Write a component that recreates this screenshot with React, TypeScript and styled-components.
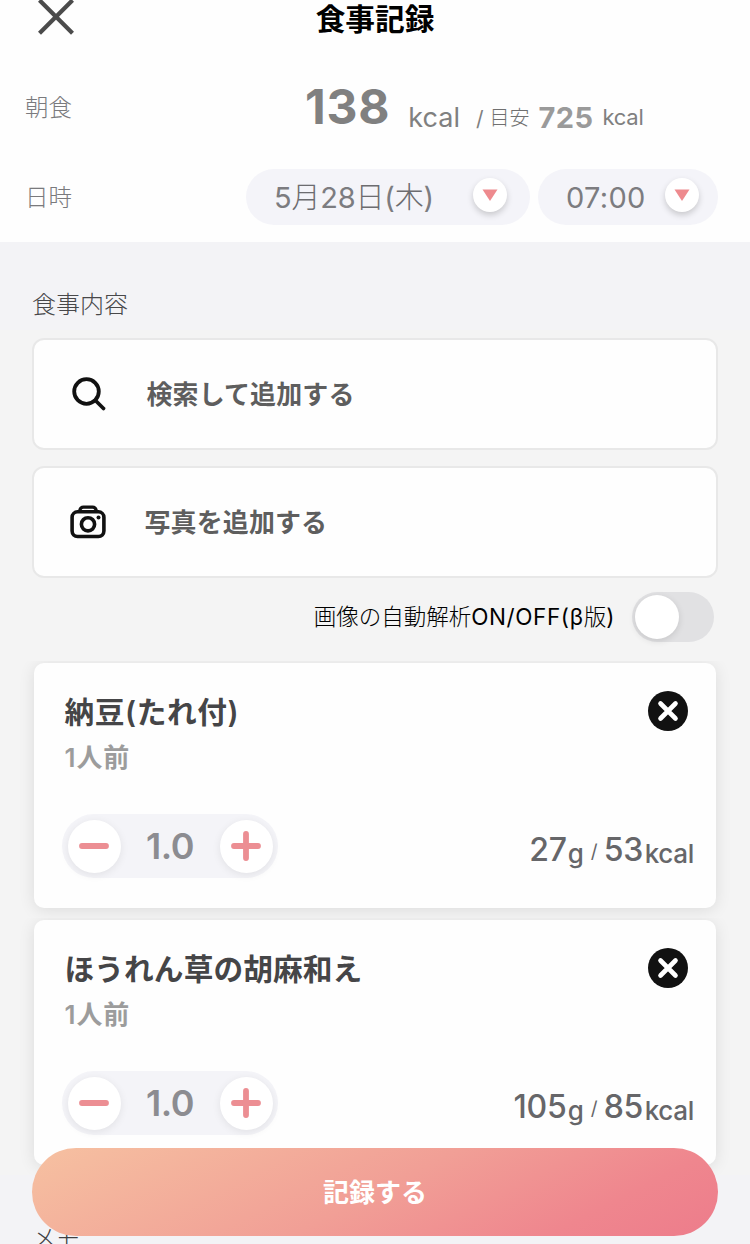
import React from "react";
import styled, { createGlobalStyle } from "styled-components";

const GlobalStyle = createGlobalStyle`
  * { box-sizing: border-box; }
  html, body { margin: 0; padding: 0; }
  body {
    font-family: Inter, "Noto Sans CJK JP", sans-serif;
    background: #f3f3f6;
  }
  button { font: inherit; border: 0; padding: 0; background: none; }
`;

const Screen = styled.div`
  position: relative;
  width: 750px;
  height: 1244px;
  overflow: hidden;
  background: #f3f3f6;
`;

const Header = styled.header`
  height: 242px;
  background: #fefefe;
`;

const TitleBar = styled.div`
  display: grid;
  grid-template-columns: 112px 1fr 112px;
  height: 38px;
`;

const CloseButton = styled.button`
  display: flex;
  justify-content: center;
  height: 38px;
`;

const Title = styled.h1`
  margin: 0;
  font-size: 29.7px;
  line-height: 38px;
  font-weight: 700;
  text-align: center;
  color: #000;
`;

const CalorieRow = styled.div`
  display: flex;
  height: 96px;
  padding-left: 25px;
  margin-top: 35px;
`;

const Label = styled.span<{ $width: number }>`
  width: ${(p) => p.$width}px;
  padding-top: 2px;
  font-size: 23.5px;
  line-height: 66px;
  font-weight: 300;
  color: #7a7a7d;
`;

const Figure = styled.span<{ $size: number; $top: number; $left?: number; $weight?: number; $color?: string; $track?: number }>`
  font-size: ${(p) => p.$size}px;
  line-height: 40px;
  height: 40px;
  margin-top: ${(p) => p.$top}px;
  margin-left: ${(p) => p.$left ?? 0}px;
  font-weight: ${(p) => p.$weight ?? 400};
  letter-spacing: ${(p) => p.$track ?? 0}px;
  color: ${(p) => p.$color ?? "#808080"};
  white-space: nowrap;
`;

const DateRow = styled.div`
  display: flex;
  align-items: center;
  height: 56px;
  padding-left: 25px;
`;

const Picker = styled.button<{ $width: number; $end: number }>`
  display: flex;
  align-items: center;
  justify-content: space-between;
  width: ${(p) => p.$width}px;
  height: 56px;
  margin-right: 8px;
  padding: 0 ${(p) => p.$end}px 0 28px;
  border-radius: 28px;
  background: #f4f4f9;
  font-size: 29px;
  line-height: 56px;
  color: #7c7c80;
  white-space: nowrap;
`;

const PickerText = styled.span<{ $track: number }>`
  padding-top: 2px;
  letter-spacing: ${(p) => p.$track}px;
`;

const Thin = styled.span`
  font-weight: 300;
  color: #6c6c70;
`;

const Knob = styled.span`
  display: flex;
  align-items: center;
  justify-content: center;
  width: 34px;
  height: 34px;
  margin-bottom: 4px;
  border-radius: 50%;
  background: #fff;
  box-shadow: 0 3px 6px rgba(0, 0, 0, 0.18);
`;

const Heading = styled.h2`
  margin: 0;
  height: 88px;
  padding: 32px 0 0 32px;
  font-size: 24px;
  line-height: 62px;
  font-weight: 300;
  color: #48484a;
`;

const Content = styled.main`
  height: 845px;
  padding-top: 8px;
  background: #f4f4f4;
`;

const AddButton = styled.button`
  display: flex;
  align-items: center;
  width: 686px;
  height: 112px;
  margin: 0 32px 16px;
  padding-left: 34px;
  border: 2px solid #e8e8e8;
  border-radius: 12px;
  background: #fefefe;
`;

const AddLabel = styled.span<{ $left: number }>`
  margin-left: ${(p) => p.$left}px;
  padding-top: 2px;
  font-size: 26px;
  font-weight: 600;
  line-height: 40px;
  letter-spacing: 0.1px;
  color: #5e5e5e;
`;

const ToggleRow = styled.div`
  display: flex;
  align-items: center;
  justify-content: flex-end;
  height: 50px;
  margin: -2px 36px 19px 0;
  font-size: 22.5px;
  line-height: 50px;
  font-weight: 300;
  color: #000;
`;

const Latin = styled.span`
  font-weight: 400;
  letter-spacing: 0.6px;
`;

const Toggle = styled.span`
  display: flex;
  align-items: center;
  width: 82px;
  height: 50px;
  margin-left: 17px;
  padding-left: 3px;
  border-radius: 25px;
  background: #e1e1e3;
`;

const ToggleThumb = styled.span`
  width: 44px;
  height: 44px;
  border-radius: 50%;
  background: #fff;
  box-shadow: 0 2px 7px rgba(0, 0, 0, 0.12);
`;

const MealCell = styled.section`
  height: 257px;
  padding: 2px 34px 10px;
  overflow: hidden;
`;

const MealCard = styled.article`
  display: flex;
  flex-direction: column;
  justify-content: space-between;
  height: 245px;
  padding: 28px 22px 30px 28px;
  border-radius: 10px;
  background: #fefefe;
  box-shadow: 0 2px 16px rgba(0, 0, 0, 0.1);
`;

const MealTop = styled.div`
  display: flex;
  justify-content: space-between;
  padding: 0 6px 0 2.5px;
`;

const MealName = styled.div<{ $track: number }>`
  font-size: 29.7px;
  line-height: 42px;
  font-weight: 600;
  letter-spacing: ${(p) => p.$track}px;
  color: #454547;
`;

const Serving = styled.div`
  font-size: 26px;
  line-height: 50px;
  font-weight: 600;
  letter-spacing: 0.9px;
  color: #9c9c9c;
`;

const RemoveButton = styled.button`
  width: 40px;
  height: 40px;
`;

const MealBottom = styled.div`
  display: flex;
  justify-content: space-between;
`;

const Stepper = styled.div`
  display: flex;
  align-items: center;
  justify-content: space-between;
  width: 216px;
  height: 64px;
  padding: 0 5.5px;
  border-radius: 32px;
  background: #f4f4f8;
  font-size: 36px;
  letter-spacing: -0.4px;
  font-weight: 600;
  color: #8c8c91;
`;

const StepButton = styled.button`
  display: flex;
  align-items: center;
  justify-content: center;
  width: 53px;
  height: 53px;
  border-radius: 50%;
  background: #fff;
  box-shadow: 0 2px 9px rgba(0, 0, 0, 0.08);
`;

const Amount = styled.div`
  display: flex;
  height: 64px;
`;

const Memo = styled.h2`
  margin: 0;
  padding-left: 32px;
  font-size: 24px;
  line-height: 30px;
  margin-top: 49px;
  font-weight: 300;
  color: #404042;
`;

const SubmitButton = styled.button`
  position: absolute;
  left: 32px;
  bottom: 8px;
  width: 686px;
  height: 88px;
  padding-top: 2px;
  border-radius: 44px;
  background: linear-gradient(153deg, #f6c1a1 0%, #f19f96 50%, #ef868e 80%, #ed7c8b 100%);
  color: #fff;
  font-size: 26px;
  line-height: 86px;
  font-weight: 600;
`;

const DownKnob = () => (
  <Knob>
    <svg width="16" height="12" viewBox="0 0 16 12">
      <path d="M0.5 0.5H15.5L8 12Z" fill="#ee8a8e" />
    </svg>
  </Knob>
);

const meals = [
  { name: "納豆(たれ付)", track: 0.6, serving: "1人前", count: "1.0", grams: "27", kcal: "53" },
  { name: "ほうれん草の胡麻和え", track: 0.1, serving: "1人前", count: "1.0", grams: "105", kcal: "85" },
];

export default function App() {
  return (
    <Screen>
      <GlobalStyle />
      <Header>
        <TitleBar>
          <CloseButton aria-label="閉じる">
            <svg width="40" height="38" viewBox="0 0 40 38">
              <path d="M3.500 0.200L36.500 33.200M36.500 0.200L3.500 33.200" stroke="#4b4b4b" strokeWidth="4.2" />
            </svg>
          </CloseButton>
          <Title>食事記録</Title>
        </TitleBar>
        <CalorieRow>
          <Label $width={280}>朝食</Label>
          <Figure $size={48} $top={14} $weight={700} $track={0.8}>138</Figure>
          <Figure $size={27} $top={25} $left={18}>kcal</Figure>
          <Figure $size={21} $top={26} $left={16}>/</Figure>
          <Figure $size={20} $top={25} $left={6} $weight={300} $color="#707070">目安</Figure>
          <Figure $size={29} $top={25} $left={9} $weight={700} $color="#9a9a9a" $track={0.4}>725</Figure>
          <Figure $size={22} $top={24} $left={9} $track={-0.2}>kcal</Figure>
        </CalorieRow>
        <DateRow>
          <Label $width={221}>日時</Label>
          <Picker $width={284} $end={23}>
            <PickerText $track={-0.2}>
              5<Thin>月</Thin>28<Thin>日</Thin>(<Thin>木</Thin>)
            </PickerText>
            <DownKnob />
          </Picker>
          <Picker $width={180} $end={19}>
            <PickerText $track={0.3}>07:00</PickerText>
            <DownKnob />
          </Picker>
        </DateRow>
      </Header>
      <Heading>食事内容</Heading>
      <Content>
        <AddButton>
          <svg width="40" height="40" viewBox="0 0 40 40" fill="none" stroke="#111" strokeWidth="3.800" strokeLinecap="round">
            <circle cx="18.5" cy="17.5" r="12.3" />
            <path d="M27.500 26.500L35.500 34.500" />
          </svg>
          <AddLabel $left={38.5}>検索して追加する</AddLabel>
        </AddButton>
        <AddButton>
          <svg width="40" height="40" viewBox="0 0 40 40" fill="none" stroke="#111" strokeWidth="3.6">
            <rect x="4.1" y="9.8" width="31.8" height="24.700" rx="5.5" />
            <path d="M11.700 9C12 6.500 13.300 5.100 15.500 5.100H24.500C26.700 5.100 28 6.500 28.300 9" strokeWidth="3.200" />
            <circle cx="20" cy="22.300" r="6.6" />
            <circle cx="30.500" cy="15.600" r="2" fill="#111" stroke="none" />
          </svg>
          <AddLabel $left={36.5}>写真を追加する</AddLabel>
        </AddButton>
        <ToggleRow>
          <span>
            画像の自動解析<Latin>ON/OFF(β</Latin>版<Latin>)</Latin>
          </span>
          <Toggle>
            <ToggleThumb />
          </Toggle>
        </ToggleRow>
        {meals.map((m) => (
          <MealCell key={m.name}>
            <MealCard>
              <MealTop>
                <div>
                  <MealName $track={m.track}>{m.name}</MealName>
                  <Serving>{m.serving}</Serving>
                </div>
                <RemoveButton aria-label="削除">
                  <svg width="40" height="40" viewBox="0 0 40 40">
                    <circle cx="20" cy="20" r="20" fill="#111" />
                    <path d="M12.500 12.500L27.500 27.500M27.500 12.500L12.500 27.500" stroke="#fff" strokeWidth="4.600" strokeLinecap="round" />
                  </svg>
                </RemoveButton>
              </MealTop>
              <MealBottom>
                <Stepper>
                  <StepButton aria-label="減らす">
                    <svg width="30" height="30" viewBox="0 0 30 30">
                      <path d="M3 15H27" stroke="#ec8e93" strokeWidth="5.800" strokeLinecap="round" />
                    </svg>
                  </StepButton>
                  <span>{m.count}</span>
                  <StepButton aria-label="増やす">
                    <svg width="30" height="30" viewBox="0 0 30 30">
                      <path d="M3 15H27M15 3V27" stroke="#ec8e93" strokeWidth="5.800" strokeLinecap="round" />
                    </svg>
                  </StepButton>
                </Stepper>
                <Amount>
                  <Figure $size={32} $top={16} $weight={450} $color="#666669" $track={-0.2}>{m.grams}</Figure>
                  <Figure $size={26} $top={20} $left={1} $weight={450} $color="#666669">g</Figure>
                  <Figure $size={19} $top={18} $left={7} $color="#666669">/</Figure>
                  <Figure $size={32} $top={16} $left={6} $weight={450} $color="#666669" $track={-0.2}>{m.kcal}</Figure>
                  <Figure $size={26} $top={20} $left={1.5} $weight={450} $color="#666669" $track={-0.3}>kcal</Figure>
                </Amount>
              </MealBottom>
            </MealCard>
          </MealCell>
        ))}
      </Content>
      <Memo>メモ</Memo>
      <SubmitButton>記録する</SubmitButton>
    </Screen>
  );
}
